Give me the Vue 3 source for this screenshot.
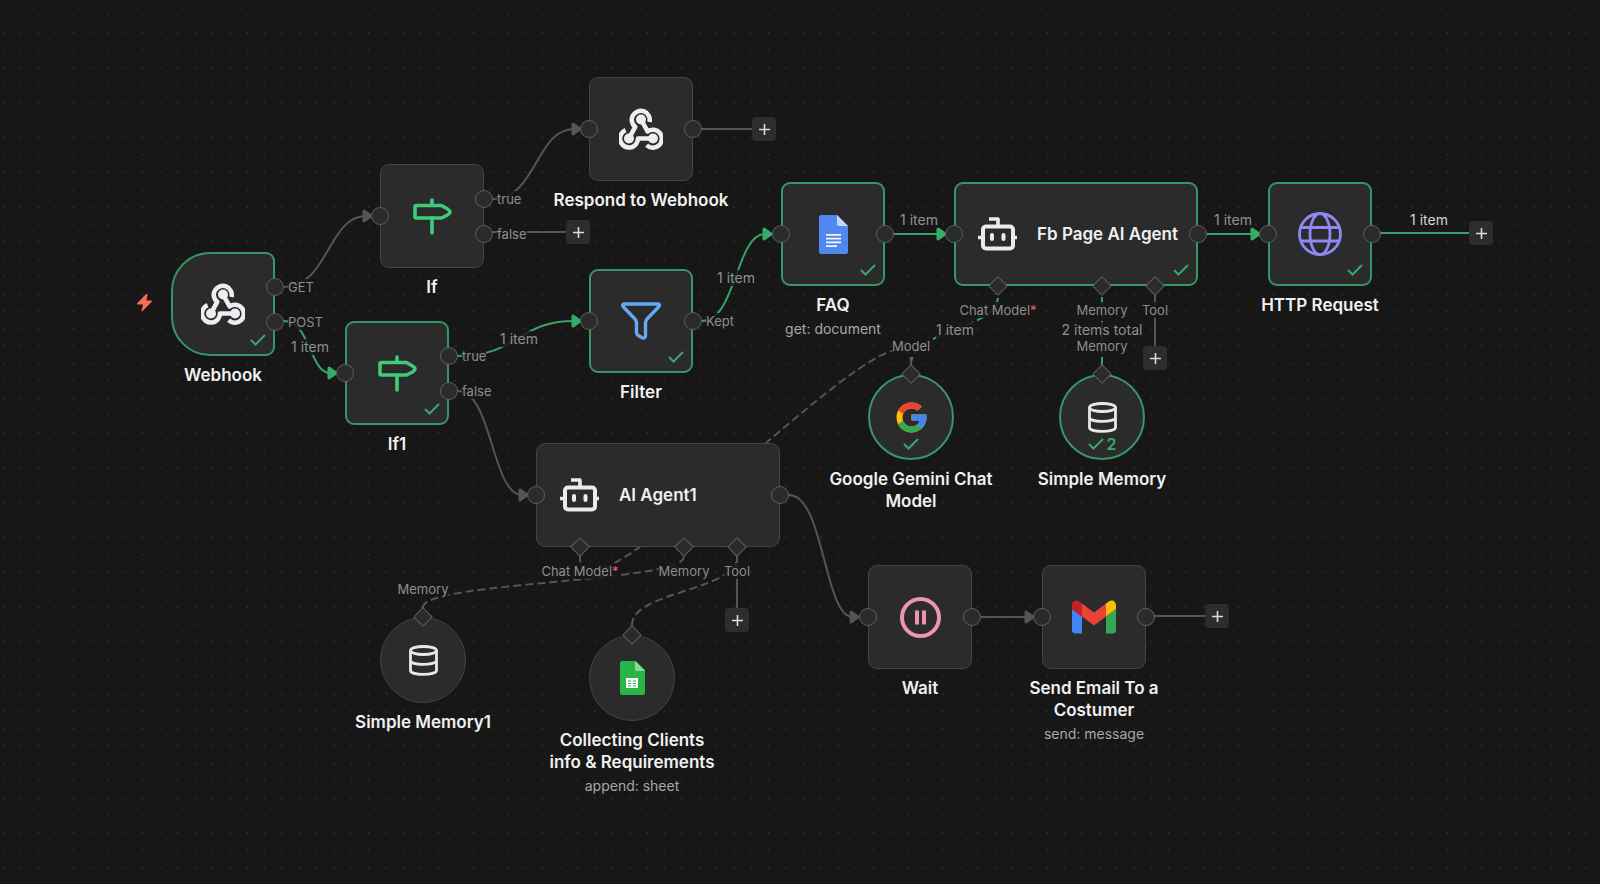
<template>
  <main class="canvas">
    <svg class="symbols" aria-hidden="true">
      <symbol id="webhook" viewBox="0 0 44 42">
        <g fill="none" stroke="#ededf2" stroke-width="4.6" stroke-linejoin="round">
          <path d="M10 30.5 16.2 18.9A9 9 0 1 1 30.5 14" />
          <path d="M22 11.5 28.6 23.4A9 9 0 1 1 27.6 37.2" />
          <path d="M34 30.5H19A9 9 0 1 1 6.6 22.2" />
        </g>
        <g fill="#ededf2">
          <circle cx="22" cy="11.5" r="5" />
          <circle cx="10" cy="30.5" r="5" />
          <circle cx="34" cy="30.5" r="5" />
        </g>
      </symbol>
      <symbol id="signpost" viewBox="0 0 39 37">
        <g fill="none" stroke="#3fcb7c" stroke-width="3.6" stroke-linejoin="round" stroke-linecap="round">
          <path d="M3.5 7.5H28.5L34.5 11Q39.5 14 34.5 17L28.5 20H3.5Q2 20 2 18.5V9Q2 7.5 3.5 7.5Z" />
          <path d="M19 2V7M19 20V35" />
        </g>
      </symbol>
      <symbol id="filter" viewBox="0 0 40 38">
        <path d="M3 2H37Q39.5 2.6 37.5 5L26.5 16.5Q24.5 18.5 24.5 21V34Q24 37 20.5 35.5L17.5 33.5Q15.5 32.5 15.5 30V21Q15.5 18.5 13.5 16.5L2.5 5Q.5 2.6 3 2Z" fill="none" stroke="#64a9f2" stroke-width="3.4" stroke-linejoin="round" />
      </symbol>
      <symbol id="docs" viewBox="0 0 29 39">
        <path d="M2.5 0H18L29 11V36.5Q29 39 26.5 39H2.5Q0 39 0 36.5V2.5Q0 0 2.5 0Z" fill="#5088f0" />
        <path d="M18 0 29 11H20Q18 11 18 9Z" fill="#c5d8fb" />
        <path d="M7 19.8H22M7 23.6H22M7 27.4H22M7 31.2H18" stroke="#f2f6ff" stroke-width="1.8" />
      </symbol>
      <symbol id="robot" viewBox="0 0 39 34">
        <g fill="none" stroke="#ebebeb" stroke-width="4" stroke-linejoin="round">
          <rect x="5" y="9.5" width="30" height="22" rx="3" />
          <path d="M11 2H20V9M0 20.5H4M35 20.5H39" stroke-width="3.6" />
          <path d="M14 18V22M25.5 18V22" stroke-linecap="round" />
        </g>
      </symbol>
      <symbol id="globe" viewBox="0 0 44 44">
        <g fill="none" stroke="#9087f5" stroke-width="2.8">
          <circle cx="22" cy="22" r="20.5" />
          <ellipse cx="22" cy="22" rx="10" ry="20.5" />
          <path d="M3 15.5H41M3 29H41" />
        </g>
      </symbol>
      <symbol id="google" viewBox="2 2 44 44">
        <path fill="#ffc107" d="M43.611 20.083H42V20H24v8h11.303c-1.649 4.657-6.080 8-11.303 8-6.627 0-12-5.373-12-12s5.373-12 12-12c3.059 0 5.842 1.154 7.961 3.039l5.657-5.657C34.046 6.053 29.268 4 24 4 12.955 4 4 12.955 4 24s8.955 20 20 20 20-8.955 20-20c0-1.341-.138-2.650-.389-3.917z" />
        <path fill="#ea4335" d="m6.306 14.691 6.571 4.819C14.655 15.108 18.961 12 24 12c3.059 0 5.842 1.154 7.961 3.039l5.657-5.657C34.046 6.053 29.268 4 24 4 16.318 4 9.656 8.337 6.306 14.691z" />
        <path fill="#34a853" d="M24 44c5.166 0 9.860-1.977 13.409-5.192l-6.190-5.238A11.910 11.910 0 0 1 24 36c-5.202 0-9.619-3.317-11.283-7.946l-6.522 5.025C9.505 39.556 16.227 44 24 44z" />
        <path fill="#4285f4" d="M43.611 20.083H24v8h11.303a12.040 12.040 0 0 1-4.087 5.571l6.193 5.238C36.971 39.205 44 34 44 24c0-1.341-.138-2.650-.389-3.917z" />
      </symbol>
      <symbol id="database" viewBox="0 0 29 31">
        <g fill="none" stroke="#e8e8e8" stroke-width="2.8">
          <ellipse cx="14.5" cy="5.5" rx="13" ry="4" />
          <path d="M1.5 5.5V25.5C1.5 30.7 27.5 30.7 27.5 25.5V5.5M1.5 15.5C1.5 20.7 27.5 20.7 27.5 15.5" />
        </g>
      </symbol>
      <symbol id="sheets" viewBox="0 0 25 34">
        <path d="M2 0H16L25 9V32Q25 34 23 34H2Q0 34 0 32V2Q0 0 2 0Z" fill="#29b446" />
        <path d="M15 0 25 10H17Q15 10 15 8Z" fill="#8fd8a0" />
        <path d="M6 17H18V27H6Z" fill="#fff" />
        <path d="M8 20H16M8 22.5H16M8 25H16" stroke="#29b446" stroke-width="1.2" />
        <path d="M12 17V27" stroke="#fff" stroke-width="1.6" />
      </symbol>
      <symbol id="pause" viewBox="0 0 41 41">
        <g fill="none" stroke="#ec94b0" stroke-width="4">
          <circle cx="20.5" cy="20.5" r="18.5" />
          <path d="M17 13.5V27.5M24 13.5V27.5" />
        </g>
      </symbol>
      <symbol id="gmail" viewBox="52 42 88 66">
        <path fill="#4285f4" d="M58 108h14V74L52 59v43c0 3.320 2.690 6 6 6" />
        <path fill="#34a853" d="M120 108h14c3.320 0 6-2.690 6-6V59l-20 15" />
        <path fill="#fbbc04" d="M120 48v26l20-15v-8c0-7.420-8.470-11.650-14.400-7.200" />
        <path fill="#ea4335" d="M72 74V48l24 18 24-18v26L96 92" />
        <path fill="#c5221f" d="M52 51v8l20 15V48l-5.600-4.200c-5.940-4.450-14.400-.220-14.400 7.200" />
      </symbol>
      <symbol id="check" viewBox="0 0 16 12">
        <path d="M1 6 5.5 10.5 15 1" fill="none" stroke="#3aa56c" stroke-width="2" />
      </symbol>
      <symbol id="bolt" viewBox="0 0 15 17">
        <path d="M9 0 0 9.5Q0 10.5 1 10.5H6L4.5 16.5Q5 17.5 6 16.5L15 7.5Q15 6.5 14 6.5H9.5L10.5 .5Q10 -.5 9 0Z" fill="#f96b5a" />
      </symbol>
    </svg>

    <svg class="edges" aria-hidden="true">
      <path
        v-for="e in edges"
        :key="e.d"
        class="edge"
        :class="{ done: e.done, dashed: e.dashed }"
        :d="e.d"
      />
      <path
        v-for="e in arrows"
        :key="`arrow-${e.d}`"
        class="arrow"
        :class="{ done: e.done }"
        :d="arrowHead(e.arrow)"
      />
    </svg>

    <span
      v-for="l in edgeLabels"
      :key="`${l.x}-${l.y}`"
      class="edge-label"
      :class="{ bright: l.bright }"
      :style="at(l)"
    >{{ l.text }}</span>

    <svg class="trigger" viewBox="0 0 15 17" role="img" aria-label="Trigger"><use href="#bolt" /></svg>

    <section
      v-for="n in nodes"
      :key="n.id"
      class="node"
      :class="[n.kind, { done: n.done }]"
      :style="at(n)"
    >
      <div class="box">
        <svg class="icon" :width="ICON_SIZE[n.icon][0]" :height="ICON_SIZE[n.icon][1]" aria-hidden="true">
          <use :href="`#${n.icon}`" />
        </svg>
        <h2 v-if="n.kind === 'agent'" class="title">{{ n.title }}</h2>
        <div v-if="n.done" class="status">
          <svg width="16" height="12" aria-hidden="true"><use href="#check" /></svg>
          <span v-if="n.runs">{{ n.runs }}</span>
        </div>
      </div>
      <div v-if="n.kind !== 'agent'" class="caption">
        <h2 class="title">{{ n.title }}</h2>
        <p v-if="n.subtitle" class="subtitle">{{ n.subtitle }}</p>
      </div>
      <template v-for="p in ports(n)" :key="`${p.side}-${p.x}-${p.y}`">
        <span v-if="p.label" class="port-label" :class="p.side" :style="at(p)">
          {{ p.label }}<b v-if="p.required">*</b>
        </span>
        <i class="port" :class="p.side" :style="at(p)"></i>
      </template>
    </section>

    <button
      v-for="b in addButtons"
      :key="`${b.x}-${b.y}`"
      class="add"
      type="button"
      aria-label="Add node"
      :style="at(b)"
    >
      <svg width="11" height="11" viewBox="0 0 11 11" aria-hidden="true">
        <path d="M5.5 0V11M0 5.5H11" stroke="#dcdcdc" stroke-width="1.6" />
      </svg>
    </button>
  </main>
</template>

<script setup>
import { computed } from 'vue'

const ICON_SIZE = {
  webhook: [44, 42],
  signpost: [39, 37],
  filter: [40, 38],
  docs: [29, 39],
  robot: [39, 34],
  globe: [44, 44],
  google: [33, 33],
  database: [29, 31],
  sheets: [25, 34],
  pause: [41, 41],
  gmail: [44, 34],
}

const SIZE = { step: [104, 104], agent: [244, 104], sub: [86, 86] }

const nodes = [
  { id: 'webhook', kind: 'step start', icon: 'webhook', title: 'Webhook', x: 171, y: 252, done: true, out: ['GET', 'POST'] },
  { id: 'if', kind: 'step', icon: 'signpost', title: 'If', x: 380, y: 164, in: true, out: ['true', 'false'] },
  { id: 'respond', kind: 'step', icon: 'webhook', title: 'Respond to Webhook', x: 589, y: 77, in: true, out: [''] },
  { id: 'if1', kind: 'step', icon: 'signpost', title: 'If1', x: 345, y: 321, done: true, in: true, out: ['true', 'false'] },
  { id: 'filter', kind: 'step', icon: 'filter', title: 'Filter', x: 589, y: 269, done: true, in: true, out: ['Kept'] },
  { id: 'faq', kind: 'step', icon: 'docs', title: 'FAQ', subtitle: 'get: document', x: 781, y: 182, done: true, in: true, out: [''] },
  { id: 'fb', kind: 'agent', icon: 'robot', title: 'Fb Page AI Agent', x: 954, y: 182, done: true, in: true, out: [''] },
  { id: 'http', kind: 'step', icon: 'globe', title: 'HTTP Request', x: 1268, y: 182, done: true, in: true, out: [''] },
  { id: 'gemini', kind: 'sub', icon: 'google', title: 'Google Gemini Chat\nModel', x: 868, y: 374, done: true, top: 'Model' },
  { id: 'memory', kind: 'sub', icon: 'database', title: 'Simple Memory', x: 1059, y: 374, done: true, runs: 2, top: 'Memory' },
  { id: 'agent1', kind: 'agent', icon: 'robot', title: 'AI Agent1', x: 536, y: 443, in: true, out: [''] },
  { id: 'memory1', kind: 'sub', icon: 'database', title: 'Simple Memory1', x: 380, y: 617, top: 'Memory' },
  { id: 'sheet', kind: 'sub', icon: 'sheets', title: 'Collecting Clients\ninfo & Requirements', subtitle: 'append: sheet', x: 589, y: 635, top: '' },
  { id: 'wait', kind: 'step', icon: 'pause', title: 'Wait', x: 868, y: 565, in: true, out: [''] },
  { id: 'email', kind: 'step', icon: 'gmail', title: 'Send Email To a\nCostumer', subtitle: 'send: message', x: 1042, y: 565, in: true, out: [''] },
]

const edges = [
  { d: 'M284 287C328 287 328 216 366 216', arrow: [373, 216] },
  { d: 'M284 321C310 321 310 373 330 373', arrow: [338, 373], done: true },
  { d: 'M493 199C536 199 536 129 574 129', arrow: [582, 129] },
  { d: 'M458 356C518 356 518 321 574 321', arrow: [582, 321], done: true },
  { d: 'M458 391C492 391 492 495 522 495', arrow: [529, 495] },
  { d: 'M702 321C736 321 736 234 765 234', arrow: [773, 234], done: true },
  { d: 'M893 234H940', arrow: [947, 234], done: true },
  { d: 'M1207 234H1254', arrow: [1261, 234], done: true },
  { d: 'M789 495C824 495 824 617 853 617', arrow: [860, 617] },
  { d: 'M980 617H1028', arrow: [1035, 617] },
  { d: 'M911 364C911 330 998 330 998 296', dashed: true, done: true },
  { d: 'M911 364C911 273 580 648 580 557', dashed: true },
  { d: 'M1102 364V296', dashed: true, done: true },
  { d: 'M423 607C423 582 684 582 684 557', dashed: true },
  { d: 'M632 625C632 591 737 591 737 557', dashed: true },
  // stubs that lead to the add buttons
  { d: 'M702 129H753' },
  { d: 'M493 232H566' },
  { d: 'M1381 233H1470', done: true },
  { d: 'M1155 296V346' },
  { d: 'M737 557V608' },
  { d: 'M1155 616H1206' },
]

const edgeLabels = [
  { text: '1 item', x: 310, y: 347 },
  { text: '1 item', x: 519, y: 339 },
  { text: '1 item', x: 736, y: 278 },
  { text: '1 item', x: 919, y: 220 },
  { text: '1 item', x: 1233, y: 220 },
  { text: '1 item', x: 1429, y: 220, bright: true },
  { text: '1 item', x: 955, y: 330 },
  { text: '2 items total', x: 1102, y: 330 },
]

const addButtons = [
  { x: 764, y: 129 },
  { x: 578, y: 232 },
  { x: 1481, y: 233 },
  { x: 1155, y: 358 },
  { x: 737, y: 620 },
  { x: 1217, y: 616 },
]

const arrows = computed(() => edges.filter((e) => e.arrow))

function arrowHead([x, y]) {
  return `M${x - 9} ${y - 5}L${x - 2} ${y}L${x - 9} ${y + 5}Z`
}

function at({ x, y }) {
  return { left: `${x}px`, top: `${y}px` }
}

function ports(n) {
  const [w, h] = SIZE[n.kind.split(' ')[0]]
  const list = []
  if (n.in) list.push({ side: 'left', x: 0, y: h / 2 })
  const out = n.out || []
  out.forEach((label, i) => {
    list.push({ side: 'right', label, x: w, y: out.length === 1 ? h / 2 : 35 + i * 35 })
  })
  if (n.kind === 'agent') {
    list.push({ side: 'bottom', label: 'Chat Model', required: true, x: 44, y: h })
    list.push({ side: 'bottom', label: 'Memory', x: 148, y: h })
    list.push({ side: 'bottom', label: 'Tool', x: 201, y: h })
  }
  if (n.kind === 'sub') list.push({ side: 'top', label: n.top, x: w / 2, y: 0 })
  return list
}
</script>

<style>
body { background: #171717; }
</style>

<style scoped>
.canvas {
  --line: #555;
  --green: #36a269;
  position: relative; min-height: 100vh; overflow: hidden;
  background-color: #171717;
  background-image: radial-gradient(circle, #282828 0, #282828 1px, transparent 1px);
  background-size: 17.4px 17.4px; background-position: -5px 7px;
  font-family: Inter, "Liberation Sans", sans-serif; color: #f0f0f0;
}
.symbols { position: absolute; width: 0; height: 0; }
.edges { position: absolute; inset: 0; width: 100%; height: 100%; }
.edge { fill: none; stroke: var(--line); stroke-width: 2; stroke-linecap: square; }
.edge.done { stroke: var(--green); }
.edge.dashed { stroke-dasharray: 6 6; }
.arrow { fill: var(--line); stroke: var(--line); stroke-width: 3; stroke-linejoin: round; }
.arrow.done { fill: #35ad68; stroke: #35ad68; }

.edge-label {
  position: absolute; transform: translate(-50%, -50%);
  font-size: 14px; line-height: 16px; white-space: nowrap;
  color: #909090; background: rgba(23, 23, 23, .85);
}
.edge-label.bright { color: #d4d4d4; }

.trigger { position: absolute; left: 137px; top: 294px; width: 15px; height: 17px; }

.node { position: absolute; }
.box {
  position: relative; box-sizing: border-box; width: 104px; height: 104px;
  display: flex; align-items: center; justify-content: center;
  background: #2b2b2b; border: 1px solid #444; border-radius: 9px;
}
.done .box { border: 2px solid #369766; }
.start .box { border-radius: 39px 9px 9px 39px; }
.agent .box { width: 244px; justify-content: flex-start; gap: 20px; padding-left: 23px; }
.agent.done .box { padding-left: 22px; }
.sub .box { width: 86px; height: 86px; border-radius: 50%; }
.icon { display: block; flex: none; }

.title { margin: 0; font-size: 17px; font-weight: 600; line-height: 22px; white-space: pre; }
.subtitle { margin: 4px 0 0; font-size: 14px; line-height: 18px; white-space: nowrap; color: #a8a8a8; }
.caption {
  position: absolute; top: 100%; left: 50%; transform: translateX(-50%);
  padding-top: 8px; text-align: center;
}

.status {
  position: absolute; right: 7px; bottom: 8px;
  display: flex; align-items: center; gap: 3px;
  font-size: 16px; font-weight: 600; line-height: 12px; color: #3aa56c;
}
.sub .status { left: 0; right: 0; justify-content: center; }

.port {
  position: absolute; box-sizing: border-box; width: 18px; height: 18px;
  margin: -9px 0 0 -9px; background: #2b2b2b; border: 1px solid #5e5e5e; border-radius: 50%;
}
.port.top, .port.bottom {
  width: 14px; height: 14px; margin: -7px 0 0 -7px;
  border-radius: 1px; transform: rotate(45deg);
}
.port-label {
  position: absolute; font-size: 13px; line-height: 16px; white-space: nowrap;
  color: #8e8e8e; background: rgba(23, 23, 23, .85);
}
.port-label b { font-weight: 400; color: #f0606c; }
.port-label.right { transform: translateY(-50%); margin-left: 13px; }
.port-label.bottom { transform: translateX(-50%); margin-top: 16px; }
.port-label.top { transform: translateX(-50%); margin-top: -36px; }

.add {
  position: absolute; width: 24px; height: 24px; margin: -12px 0 0 -12px; padding: 0;
  display: flex; align-items: center; justify-content: center;
  background: #2d2d2d; border: 0; border-radius: 4px; cursor: pointer;
}
</style>
